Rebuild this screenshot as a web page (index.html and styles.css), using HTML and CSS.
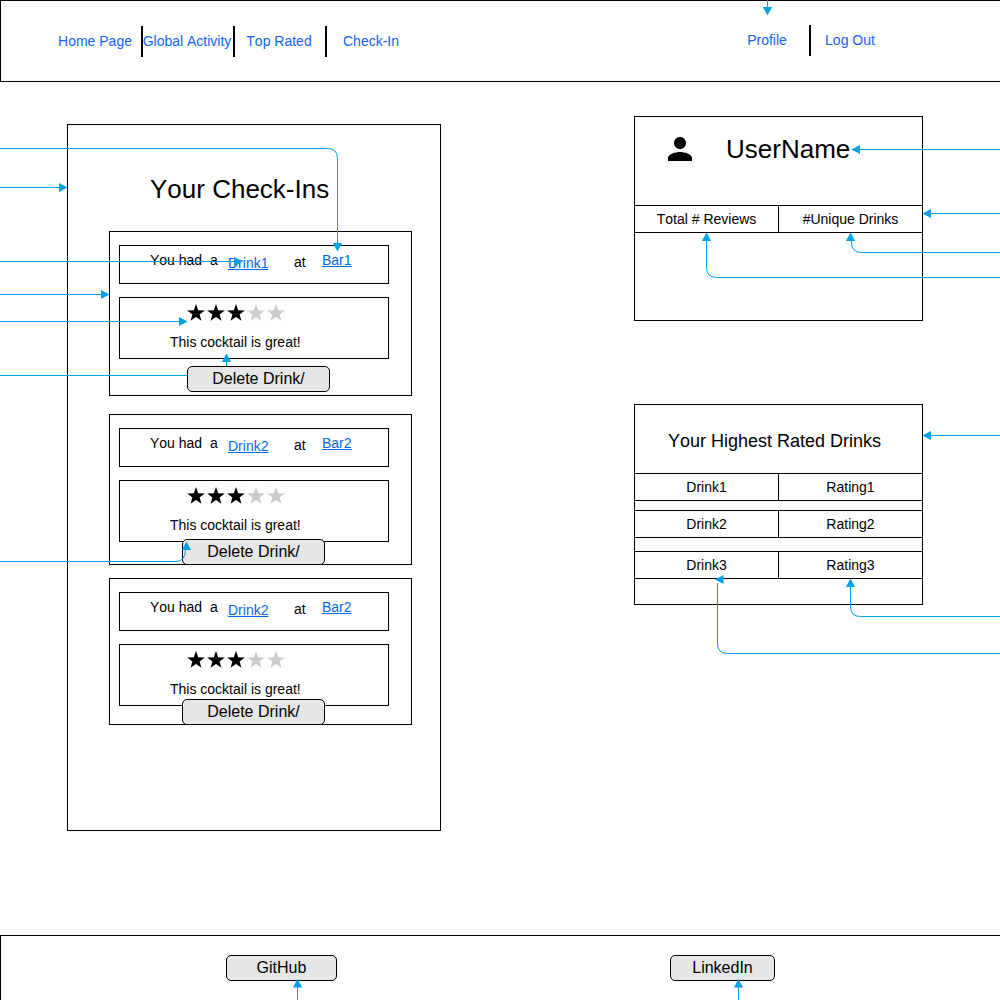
FILE: index.html
```html
<!DOCTYPE html>
<html lang="en">
<head>
<meta charset="utf-8">
<title>Profile</title>
<link rel="stylesheet" href="styles.css">
</head>
<body>
<svg class="defs" width="0" height="0">
  <symbol id="star" viewBox="0 0 20 20"><path d="M10 1.100l2.200 6.100 6.600.2-5.200 4 1.850 6.400L10 14.100l-5.450 3.700 1.850-6.400-5.200-4 6.600-.2z"/></symbol>
</svg>
<div class="page">
  <header class="topbar">
    <nav class="nav nav-main">
      <a class="sep">Home Page</a><a class="sep">Global Activity</a><a class="sep">Top Rated</a><a>Check-In</a>
    </nav>
    <nav class="nav nav-user">
      <a class="sep">Profile</a><a>Log Out</a>
    </nav>
  </header>

  <main class="content">
    <section class="checkins">
      <h1>Your Check-Ins</h1>
      <article class="card card-first">
        <div class="line"><span class="had">You had&nbsp; a</span><a class="drink">Drink1</a><span class="at">at</span><a class="bar">Bar1</a></div>
        <div class="review">
          <div class="stars"><svg><use href="#star"/></svg><svg><use href="#star"/></svg><svg><use href="#star"/></svg><svg class="off"><use href="#star"/></svg><svg class="off"><use href="#star"/></svg></div>
          <p>This cocktail is great!</p>
        </div>
        <button class="btn">Delete Drink/</button>
      </article>
      <article class="card card-second">
        <div class="line"><span class="had">You had&nbsp; a</span><a class="drink">Drink2</a><span class="at">at</span><a class="bar">Bar2</a></div>
        <div class="review">
          <div class="stars"><svg><use href="#star"/></svg><svg><use href="#star"/></svg><svg><use href="#star"/></svg><svg class="off"><use href="#star"/></svg><svg class="off"><use href="#star"/></svg></div>
          <p>This cocktail is great!</p>
        </div>
        <button class="btn">Delete Drink/</button>
      </article>
      <article class="card card-third">
        <div class="line"><span class="had">You had&nbsp; a</span><a class="drink">Drink2</a><span class="at">at</span><a class="bar">Bar2</a></div>
        <div class="review">
          <div class="stars"><svg><use href="#star"/></svg><svg><use href="#star"/></svg><svg><use href="#star"/></svg><svg class="off"><use href="#star"/></svg><svg class="off"><use href="#star"/></svg></div>
          <p>This cocktail is great!</p>
        </div>
        <button class="btn">Delete Drink/</button>
      </article>
    </section>

    <aside class="side">
      <section class="profile">
        <div class="user">
          <svg class="avatar" viewBox="0 0 24 24"><path d="M12 12c2.21 0 4-1.79 4-4s-1.79-4-4-4-4 1.79-4 4 1.79 4 4 4zm0 2c-2.67 0-8 1.34-8 4v2h16v-2c0-2.66-5.33-4-8-4z"/></svg>
          <h2>UserName</h2>
        </div>
        <div class="row"><span>Total # Reviews</span><span>#Unique Drinks</span></div>
      </section>
      <section class="ratings">
        <h3>Your Highest Rated Drinks</h3>
        <div class="row"><span>Drink1</span><span>Rating1</span></div>
        <div class="row row-two"><span>Drink2</span><span>Rating2</span></div>
        <div class="row row-three"><span>Drink3</span><span>Rating3</span></div>
      </section>
    </aside>
  </main>

  <footer class="footer">
    <button class="btn github">GitHub</button>
    <button class="btn linkedin">LinkedIn</button>
  </footer>

  <svg class="arrows" width="1000" height="1000" viewBox="0 0 1000 1000">
    <g class="wires">
      <path d="M767.5 0V8"/>
      <path d="M0 148.5H327.5Q337.5 148.5 337.5 158.5V244"/>
      <path d="M0 187.5H60"/>
      <path d="M0 261.5H235"/>
      <path d="M0 294.5H102"/>
      <path d="M0 321.5H180"/>
      <path d="M0 375.5H187M226.5 366V361"/>
      <path d="M0 561.5H176Q185.5 561.5 185.5 549"/>
      <path d="M1000 149.5H859"/>
      <path d="M1000 213.5H930"/>
      <path d="M1000 252.5H861.5Q851.5 252.5 851.5 242.500V240"/>
      <path d="M1000 277.5H716.5Q706.5 277.5 706.5 267.5V240"/>
      <path d="M1000 435.5H930"/>
      <path d="M1000 616.5H860.5Q850.5 616.5 850.5 606.5V586"/>
      <path d="M1000 653.5H727.5Q717.5 653.5 717.5 643.5V583"/>
      <path d="M297.5 1000V987M738.5 1000V987"/>
    </g>
    <g class="heads">
      <path d="M767.5 15.500l-4.600-8.500h9.200z"/>
      <path d="M337.5 251.500l-4.600-8.500h9.200z"/>
      <path d="M67.5 187.500l-8.500-4.600v9.200z"/>
      <path d="M243 261.500l-9-4.600v9.200z"/>
      <path d="M109.5 294.500l-8.500-4.600v9.200z"/>
      <path d="M187.5 321.500l-8.500-4.600v9.200z"/>
      <path d="M226.5 353.500l-4.600 8.500h9.200z"/>
      <path d="M186.5 541.500l-4.600 8.500h9.200z"/>
      <path d="M851.5 149.500l8.500-4.600v9.200z"/>
      <path d="M922.5 213.500l8.500-4.600v9.200z"/>
      <path d="M850.5 232.500l-4.600 8.500h9.200z"/>
      <path d="M706.5 232.500l-4.600 8.500h9.200z"/>
      <path d="M922.5 435.500l8.500-4.600v9.200z"/>
      <path d="M850.5 578.500l-4.600 8.500h9.200z"/>
      <path d="M715 579.500l8.500-4.600v9.200z"/>
      <path d="M297.5 979l-4.600 8.500h9.200z"/>
      <path d="M738.5 979l-4.600 8.500h9.200z"/>
    </g>
  </svg>
</div>
</body>
</html>
```
FILE: styles.css
```css
* { box-sizing: border-box; }
body {
  margin: 0;
  background: #fff;
  color: #000;
  font: 14px/16px "Liberation Sans", Arial, sans-serif;
  font-kerning: none;
}
h1, h2, h3, p { margin: 0; font-weight: 400; }
.defs { position: absolute; }
.page {
  position: relative;
  width: 1000px;
  height: 1000px;
  overflow: hidden;
  display: flex;
  flex-direction: column;
}

.topbar {
  flex: none;
  display: flex;
  width: 1020px;
  height: 82px;
  border: 1px solid #000;
}
.nav { display: flex; color: #1463f3; }
.nav a {
  position: relative;
  width: 92px;
  height: 31px;
  line-height: 30px;
  text-align: center;
  white-space: nowrap;
}
.nav .sep::after {
  content: "";
  position: absolute;
  left: 100%;
  top: 0;
  width: 2px;
  height: 31px;
  background: #000;
}
.nav-main { padding: 25px 0 0 48px; }
.nav-user { padding: 24px 0 0 308px; }
.nav-user a:first-child { width: 84px; }
.nav-user a:last-child { width: 82px; }

.content { flex: none; display: flex; align-items: flex-start; height: 853px; }
.checkins {
  width: 374px;
  height: 707px;
  margin: 42px 0 0 67px;
  padding-left: 41px;
  border: 1px solid #000;
}
.checkins h1 {
  height: 106px;
  padding: 49px 0 0 41px;
  font-size: 26px;
  line-height: 30px;
}
.card {
  width: 303px;
  padding: 13px 0 0 9px;
  border: 1px solid #000;
}
.card-first { height: 165px; }
.card-second { height: 151px; margin-top: 18px; }
.card-third { height: 147px; margin-top: 13px; }
.line {
  display: flex;
  align-items: flex-start;
  width: 270px;
  height: 39px;
  padding: 6px 0 0 30px;
  border: 1px solid #000;
}
.line a { color: #006be6; text-decoration: underline; }
.had { width: 78px; }
.drink { width: 66px; padding-top: 3px; }
.at { width: 28px; padding-top: 2px; }
.review {
  width: 270px;
  height: 62px;
  margin-top: 13px;
  padding: 5px 0 0 50px;
  border: 1px solid #000;
}
.stars { display: flex; padding-left: 16px; }
.stars svg { width: 20px; height: 20px; }
.stars .off { fill: #ccc; }
.review p { padding-top: 11px; }
.btn {
  display: block;
  width: 143px;
  height: 26px;
  padding: 0;
  color: #000;
  background: #e6e6e6;
  border: 1px solid #000;
  border-radius: 5px;
  font: 16px/24px "Liberation Sans", Arial, sans-serif;
  font-kerning: none;
}
.card .btn { position: relative; }
.card-first .btn { margin: 7px 0 0 68px; }
.card-second .btn { margin: -3px 0 0 63px; }
.card-third .btn { margin: -7px 0 0 63px; }

.side { width: 289px; margin: 34px 0 0 193px; }
.profile { height: 205px; border: 1px solid #000; }
.user { display: flex; height: 88px; padding: 14px 0 0 27px; }
.avatar { width: 36px; height: 36px; }
.user h2 { padding: 3px 0 0 28px; font-size: 26px; line-height: 30px; }
.row {
  display: flex;
  height: 28px;
  border: solid #000;
  border-width: 1px 0;
  line-height: 26px;
  text-align: center;
}
.row span { width: 143px; }
.row span:first-child { width: 144px; border-right: 1px solid #000; }
.ratings { height: 201px; margin-top: 83px; border: 1px solid #000; }
.ratings h3 {
  height: 68px;
  padding: 26px 0 0 33px;
  font-size: 18px;
  line-height: 20px;
}
.row-two { margin-top: 9px; }
.row-three { margin-top: 13px; }

.footer {
  flex: none;
  display: flex;
  width: 1020px;
  height: 90px;
  padding: 19px 0 0 225px;
  border: 1px solid #000;
}
.github { width: 111px; }
.linkedin { width: 105px; margin-left: 333px; }

.arrows { position: absolute; left: 0; top: 0; pointer-events: none; }
.wires { fill: none; stroke: #00a0e6; stroke-width: 1; }
.heads { fill: #00a0e6; }
```
